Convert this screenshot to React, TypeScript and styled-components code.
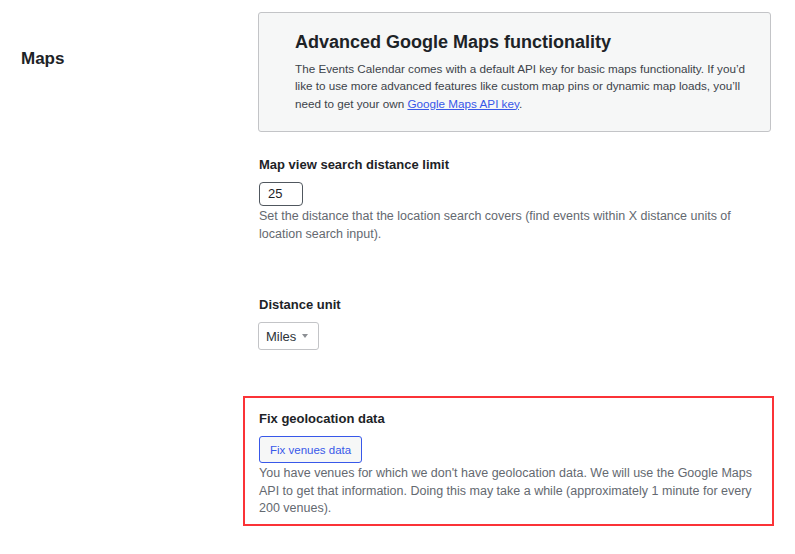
import React from "react";
import styled, { createGlobalStyle } from "styled-components";

const Global = createGlobalStyle`
  html, body { margin: 0; padding: 0; background: #ffffff; }
  body { font-family: "Liberation Sans", Arial, sans-serif; color: #1d2327; }
`;

const Page = styled.div`
  display: grid;
  grid-template-columns: 258px 513px;
  width: 795px;
  min-height: 554px;
  box-sizing: border-box;
  padding-top: 12px;
`;

const SectionTitle = styled.h2`
  margin: 37px 0 0 21px;
  font-size: 17px;
  font-weight: 700;
  line-height: 20px;
  color: #1d2327;
`;

const Fields = styled.div`
  display: flex;
  flex-direction: column;
`;

const InfoBox = styled.div`
  box-sizing: border-box;
  height: 120px;
  background: #f6f7f7;
  border: 1px solid #c3c4c7;
  border-radius: 3px;
  padding: 18px 20px 0 36px;
`;

const InfoTitle = styled.h3`
  margin: 0 0 7px 0;
  font-size: 18px;
  font-weight: 700;
  line-height: 22px;
  color: #1d2327;
`;

const InfoText = styled.p`
  margin: 0;
  font-size: 11.7px;
  line-height: 17.3px;
  color: #3c434a;
`;

const Link = styled.a`
  color: #3858e9;
  text-decoration: underline;
`;

const Field = styled.div<{ $top: number }>`
  margin-top: ${(p) => p.$top}px;
  padding-left: 1px;
`;

const Label = styled.div`
  font-size: 13px;
  font-weight: 700;
  line-height: 18px;
  color: #1d2327;
`;

const NumberInput = styled.div`
  box-sizing: border-box;
  width: 44px;
  height: 24px;
  margin-top: 8px;
  border: 1px solid #50575e;
  border-radius: 4px;
  padding: 0 0 0 8px;
  font-size: 13px;
  line-height: 22px;
  color: #1d2327;
`;

const Description = styled.p<{ $top?: number }>`
  margin: ${(p) => p.$top ?? 1}px 0 0 0;
  font-size: 12.5px;
  line-height: 17.5px;
  color: #646970;
`;

const Select = styled.div`
  box-sizing: border-box;
  display: flex;
  align-items: center;
  justify-content: space-between;
  width: 61px;
  height: 28px;
  margin-top: 8px;
  margin-left: -1px;
  border: 1px solid #c3c4c7;
  border-radius: 3px;
  padding: 0 10px 0 7px;
  font-size: 13px;
  color: #2c3338;
`;

const Caret = styled.span`
  width: 0;
  height: 0;
  border-left: 3px solid transparent;
  border-right: 3px solid transparent;
  border-top: 4px solid #8c8f94;
`;

const Highlight = styled.div`
  box-sizing: border-box;
  margin: 46px -3px 0 -15px;
  height: 130px;
  border: 2px solid #fb3337;
  padding: 12px 14px 0 14px;
`;

const Button = styled.div`
  box-sizing: border-box;
  display: inline-flex;
  align-items: center;
  margin-top: 8px;
  height: 27px;
  padding: 0 10px;
  border: 1px solid #3858e9;
  border-radius: 3px;
  background: #f6f7f7;
  color: #3858e9;
  font-size: 11.5px;
`;

const Row = styled.div``;

export default function App() {
  return (
    <>
      <Global />
      <Page>
        <SectionTitle>Maps</SectionTitle>
        <Fields>
          <InfoBox>
            <InfoTitle>Advanced Google Maps functionality</InfoTitle>
            <InfoText>
              The Events Calendar comes with a default API key for basic maps functionality. If you’d
              like to use more advanced features like custom map pins or dynamic map loads, you’ll
              need to get your own <Link href="#">Google Maps API key</Link>.
            </InfoText>
          </InfoBox>
          <Field $top={24}>
            <Label>Map view search distance limit</Label>
            <NumberInput>25</NumberInput>
            <Description $top={2}>
              Set the distance that the location search covers (find events within X distance units of
              location search input).
            </Description>
          </Field>
          <Field $top={53}>
            <Label>Distance unit</Label>
            <Select>
              <span>Miles</span>
              <Caret />
            </Select>
          </Field>
          <Highlight>
            <Label>Fix geolocation data</Label>
            <Row>
              <Button>Fix venues data</Button>
            </Row>
            <Description $top={2}>
              You have venues for which we don't have geolocation data. We will use the Google Maps
              API to get that information. Doing this may take a while (approximately 1 minute for every
              200 venues).
            </Description>
          </Highlight>
        </Fields>
      </Page>
    </>
  );
}
